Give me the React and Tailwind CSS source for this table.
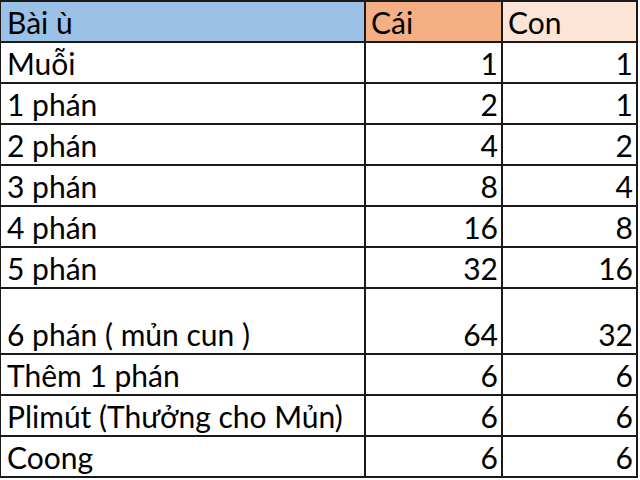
const rows = [
  { name: 'Muỗi', cai: 1, con: 1 },
  { name: '1 phán', cai: 2, con: 1 },
  { name: '2 phán', cai: 4, con: 2 },
  { name: '3 phán', cai: 8, con: 4 },
  { name: '4 phán', cai: 16, con: 8 },
  { name: '5 phán', cai: 32, con: 16 },
  { name: '6 phán ( mủn cun )', cai: 64, con: 32, tall: true },
  { name: 'Thêm 1 phán', cai: 6, con: 6 },
  { name: 'Plimút (Thưởng cho Mủn)', cai: 6, con: 6 },
  { name: 'Coong', cai: 6, con: 6 },
];

const Cell = ({ children, className = '', tall }) => (
  <div
    className={`flex items-end pb-[4px] leading-none ${tall ? 'h-[64px]' : 'h-[39px]'} ${className}`}
  >
    {children}
  </div>
);

export default function App() {
  return (
    <div className="w-[640px] h-[480px] bg-white font-['Lato','Noto_Sans',sans-serif] text-[30px] text-black">
      <div className="grid w-[638px] grid-cols-[363px_135px_133px] gap-[2px] bg-[#1a1a1a] pt-[2px] pr-[2px] pb-[2px] pl-[1px]">
        <Cell className="bg-[#9bc2e6] pl-[6px]">Bài ù</Cell>
        <Cell className="bg-[#f4b084] pl-[5px]">Cái</Cell>
        <Cell className="bg-[#fce4d6] pl-[5px]">Con</Cell>
        {rows.map((r) => (
          <div key={r.name} className="contents">
            <Cell tall={r.tall} className="bg-white pl-[6px]">{r.name}</Cell>
            <Cell tall={r.tall} className="bg-white justify-end pr-[3px]">{r.cai}</Cell>
            <Cell tall={r.tall} className="bg-white justify-end pr-[3px]">{r.con}</Cell>
          </div>
        ))}
      </div>
    </div>
  );
}
